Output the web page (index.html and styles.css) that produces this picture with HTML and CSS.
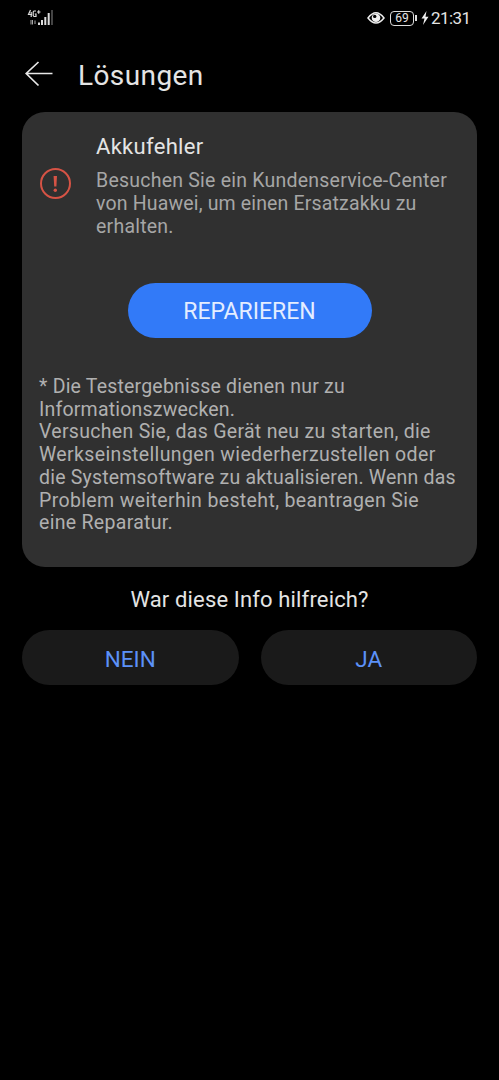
FILE: index.html
```html
<!DOCTYPE html>
<html lang="de">
<head>
<meta charset="utf-8">
<title>Lösungen</title>
<link rel="stylesheet" href="styles.css">
</head>
<body>
<div class="status">
  <svg class="signal" width="28" height="18" viewBox="0 0 28 18" fill="#ddd">
    <path d="M3.500 1 1.500 5.500H5M4.200 3V8M9 2H7L6.200 3V6.500L7 7.500H9V5H7.800M10 3H13.500M11.700 1.200V4.800" fill="none" stroke="#ddd" stroke-width="1.200"/>
    <path d="M4 11v4.500M5.500 11v4.500M8 11.500v3.500" fill="none" stroke="#aaa" stroke-width="1"/>
    <path d="M11 13.500h2V16h-2zM14 11h2v5h-2zM17.300 8h2v8h-2zM20.700 4h2v12h-2z"/>
    <path d="M24 1h2v15h-2z" fill="#444"/>
  </svg>
  <div class="right">
    <svg width="18" height="14" viewBox="0 0 18 14">
      <path d="M1 7Q9-3.500 17 7Q9 17 1 7Z" fill="none" stroke="#eee" stroke-width="1.500"/>
      <circle cx="9" cy="6.800" r="4.300" fill="#eee"/><circle cx="7.700" cy="5.400" r="1.700" fill="#000"/>
    </svg>
    <span class="battery">69</span><i class="tip"></i>
    <svg class="bolt" width="8" height="14" viewBox="0 0 8 14"><path d="M5.500 0 .500 7.500H3.500L2 14 7.500 5.700H4.500Z" fill="#eee"/></svg>
    <span class="time">21:31</span>
  </div>
</div>
<header class="header">
  <svg width="28" height="26" viewBox="0 0 28 26" fill="none" stroke="#e8e8e8" stroke-width="1.700"><path d="M27.500 12.500H1.500M13.500 1 1.200 12.500 13.500 24.500"/></svg>
  <h1>Lösungen</h1>
</header>
<main class="card">
  <section class="fault">
    <svg class="alert" width="32" height="32" viewBox="0 0 32 32"><circle cx="16.500" cy="15.500" r="14.500" fill="none" stroke="#d65345" stroke-width="2"/><path d="M14.600 8h3.400l-.6 10.500h-2.200z" fill="#d65345"/><circle cx="16.300" cy="22.200" r="1.700" fill="#d65345"/></svg>
    <div>
      <h2>Akkufehler</h2>
      <p class="desc"><span>Besuchen Sie ein Kundenservice-Center</span><span class="snug">von Huawei, um einen Ersatzakku zu</span><span>erhalten.</span></p>
    </div>
  </section>
  <button class="repair">REPARIEREN</button>
  <p class="note"><span class="snug">* Die Testergebnisse dienen nur zu</span><span class="snug">Informationszwecken.</span><span>Versuchen Sie, das Gerät neu zu starten, die</span><span class="loose">Werkseinstellungen wiederherzustellen oder</span><span class="snug">die Systemsoftware zu aktualisieren. Wenn das</span><span class="loose">Problem weiterhin besteht, beantragen Sie</span><span>eine Reparatur.</span></p>
</main>
<p class="question">War diese Info hilfreich?</p>
<div class="answers"><button>NEIN</button><button>JA</button></div>
</body>
</html>
```
FILE: styles.css
```css
* { box-sizing: border-box; margin: 0; }
body { background: #000; height: 1080px; overflow: hidden; font-family: Roboto, sans-serif; color: #e4e4e4; white-space: nowrap; }
button { border: 0; padding: 2px 0 0; font-family: inherit; font-weight: 400; display: block; }
.status { height: 36px; display: flex; justify-content: space-between; padding: 9px 29px 0 27px; }
.right { display: flex; align-items: center; height: 18px; }
.battery { width: 24px; height: 15px; border: 1.5px solid #ddd; border-radius: 4px; margin-left: 5px; font-size: 12px; line-height: 13px; text-align: center; }
.tip { width: 2px; height: 6px; background: #ddd; margin-left: 1px; }
.bolt { margin: 0 2px 0 4px; }
.time { font-size: 17px; width: 39px; letter-spacing: -.6px; }
.header { height: 76px; display: flex; align-items: flex-start; padding: 25px 0 0 25px; }
.header h1 { font-size: 28px; font-weight: 400; line-height: 32px; margin: -1px 0 0 25px; letter-spacing: .4px; }
.card { margin: 0 22px; height: 455px; border-radius: 23px; background: #303030; padding: 22px 17px 0; }
.fault { display: flex; gap: 25px; height: 149px; }
.alert { margin-top: 34px; flex: none; }
.fault h2 { font-size: 22px; line-height: 26px; font-weight: 400; letter-spacing: .3px; }
.desc span, .note span { display: block; }
.desc { font-size: 19.5px; line-height: 22.600px; color: #a6a6a6; margin-top: 10.4px; letter-spacing: .23px; }
.desc .snug { letter-spacing: .16px; }
.repair { width: 244px; height: 55px; border-radius: 28px; background: #327af8; color: #e4edff; font-size: 23px; margin: 0 auto; }
.note { font-size: 19.5px; line-height: 22.700px; color: #b0b0b0; margin-top: 38px; letter-spacing: .3px; }
.note .snug { letter-spacing: .2px; }
.note .loose { letter-spacing: .36px; }
.question { text-align: center; font-size: 22px; line-height: 26px; margin-top: 20px; letter-spacing: .15px; }
.answers { display: grid; grid-template-columns: 1fr 1fr; gap: 22px; padding: 0 22px; margin-top: 17px; }
.answers button { height: 55px; border-radius: 28px; background: #1a1a1a; color: #5c91f8; font-size: 22.5px; }
```
